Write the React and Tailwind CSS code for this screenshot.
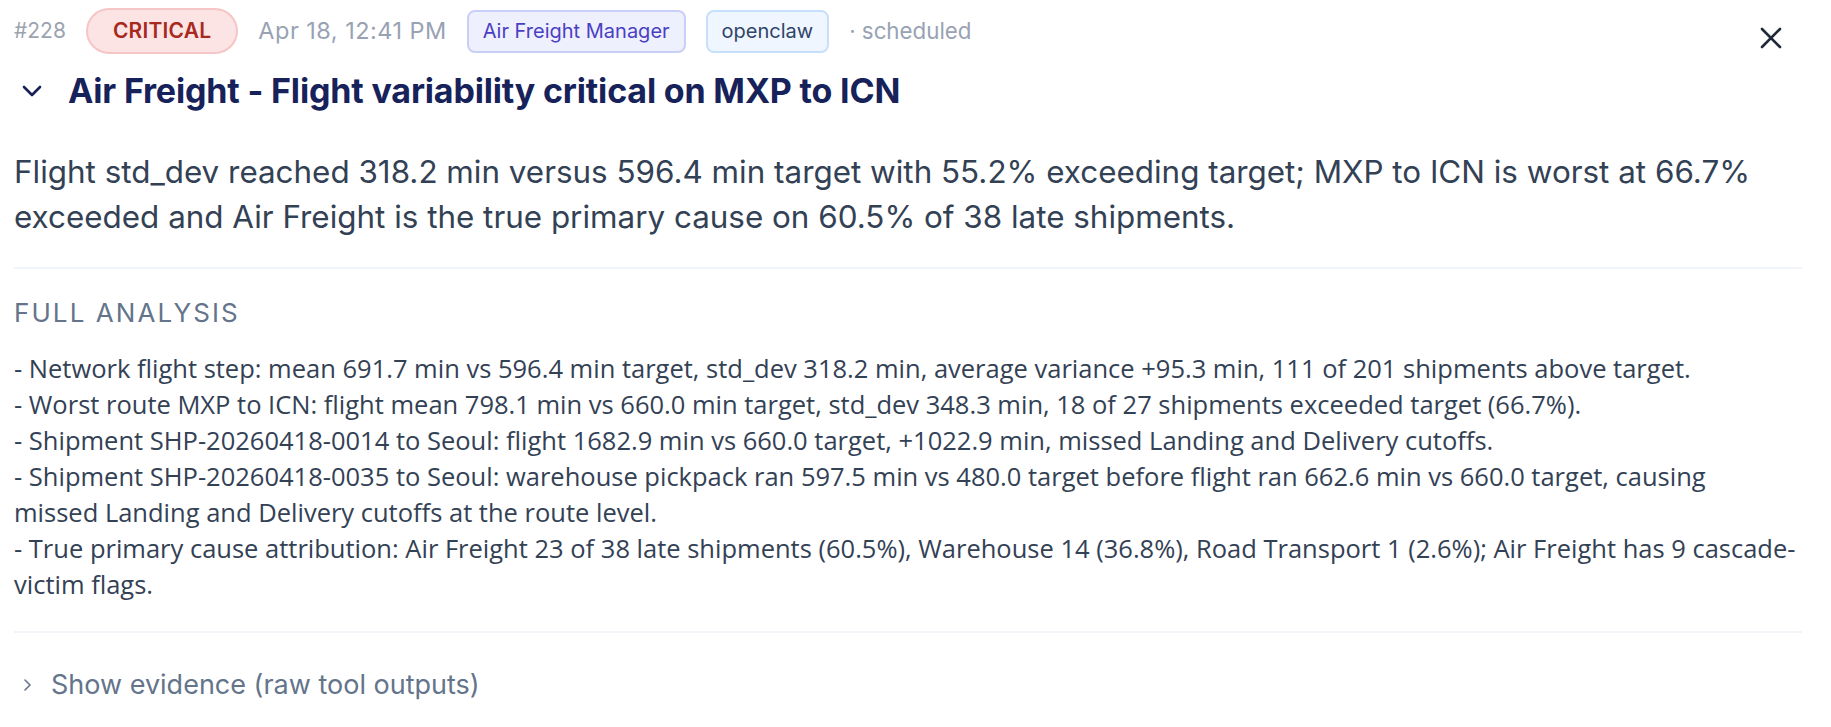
import React from "react";

const lines = [
  "- Network flight step: mean 691.7 min vs 596.4 min target, std_dev 318.2 min, average variance +95.3 min, 111 of 201 shipments above target.",
  "- Worst route MXP to ICN: flight mean 798.1 min vs 660.0 min target, std_dev 348.3 min, 18 of 27 shipments exceeded target (66.7%).",
  "- Shipment SHP-20260418-0014 to Seoul: flight 1682.9 min vs 660.0 target, +1022.9 min, missed Landing and Delivery cutoffs.",
  "- Shipment SHP-20260418-0035 to Seoul: warehouse pickpack ran 597.5 min vs 480.0 target before flight ran 662.6 min vs 660.0 target, causing",
  "missed Landing and Delivery cutoffs at the route level.",
  "- True primary cause attribution: Air Freight 23 of 38 late shipments (60.5%), Warehouse 14 (36.8%), Road Transport 1 (2.6%); Air Freight has 9 cascade-",
  "victim flags.",
];

export default function App() {
  return (
    <div
      className="relative w-full min-h-[727px] bg-white pl-[14px] pr-[29px] pt-[8px]"
      style={{ fontFamily: "Inter, 'Noto Sans', sans-serif" }}
    >
      {/* close */}
      <button className="absolute right-[49px] top-[27px] w-[22px] h-[22px] text-[#1f2937]" aria-label="Close">
        <svg viewBox="0 0 22 22" width="22" height="22" fill="none" stroke="currentColor" strokeWidth="2.6" strokeLinecap="round">
          <line x1="2" y1="2" x2="20" y2="20" />
          <line x1="20" y1="2" x2="2" y2="20" />
        </svg>
      </button>

      {/* meta row */}
      <div className="flex items-center gap-[20px] h-[46px]">
        <span className="text-[21px] text-[#9ca3af]">#228</span>
        <span className="h-[46px] px-[25px] flex items-center rounded-full bg-[#fce4e4] border-2 border-[#f6c5c5] text-[#a8291d] text-[21px] font-semibold tracking-[0.01em]">
          CRITICAL
        </span>
        <span className="text-[23.5px] tracking-[0.02em] text-[#98a2b3]">Apr 18, 12:41 PM</span>
        <span className="h-[43px] px-[14px] flex items-center rounded-[8px] bg-[#eef0fe] border-2 border-[#c9cff7] text-[#4a3fc4] text-[20px]">
          Air Freight Manager
        </span>
        <span className="h-[43px] px-[14px] flex items-center rounded-[8px] bg-[#eff6ff] border-2 border-[#c6e0fb] text-[#2f4468] text-[20px]">
          openclaw
        </span>
        <span className="text-[#98a2b3] text-[22.3px]">· scheduled</span>
      </div>

      {/* title */}
      <div className="mt-[15px] flex items-center h-[44px]">
        <svg className="ml-[8px] mr-[26px] text-[#17225a]" width="20" height="12" viewBox="0 0 20 12" fill="none" stroke="currentColor" strokeWidth="2.6" strokeLinecap="round" strokeLinejoin="round">
          <polyline points="2,2 10,10 18,2" />
        </svg>
        <h1 className="text-[34px] leading-[44px] font-bold text-[#17225a] tracking-[-0.005em]">
          Air Freight - Flight variability critical on MXP to ICN
        </h1>
      </div>

      {/* summary */}
      <p className="mt-[37px] text-[31.4px] leading-[45px] text-[#334155]">
        Flight std_dev reached 318.2 min versus 596.4 min target with 55.2% exceeding target; MXP to ICN is worst at 66.7%
        <br />
        exceeded and Air Freight is the true primary cause on 60.5% of 38 late shipments.
      </p>

      <div className="mt-[27px] h-[2px] bg-[#f1f5f9]" />

      <div className="mt-[28px] text-[26px] leading-[32px] tracking-[0.08em] text-[#64748b]">FULL ANALYSIS</div>

      <div
        className="mt-[21px] text-[25.5px] leading-[36px] text-[#334155]"
        style={{ fontFamily: "'Open Sans', 'Noto Sans', sans-serif" }}
      >
        {lines.map((t, i) => (
          <div key={i} className="whitespace-nowrap">{t}</div>
        ))}
      </div>

      <div className="mt-[29px] h-[2px] bg-[#f1f5f9]" />

      <div className="mt-[36px] flex items-center h-[32px] text-[#64748b]">
        <svg className="ml-[9px] mr-[19px]" width="9" height="12" viewBox="0 0 9 12" fill="none" stroke="currentColor" strokeWidth="1.6" strokeLinecap="round" strokeLinejoin="round">
          <polyline points="2,1 7,6 2,11" />
        </svg>
        <span className="text-[27px] leading-[32px]">Show evidence (raw tool outputs)</span>
      </div>
    </div>
  );
}
